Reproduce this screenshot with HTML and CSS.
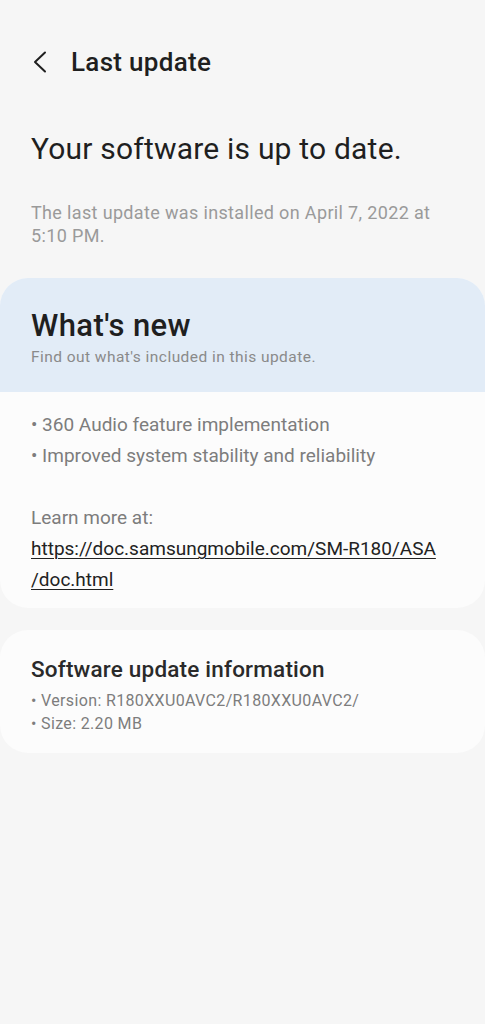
FILE: index.html
```html
<!DOCTYPE html>
<html>
<head>
<meta charset="utf-8">
<link rel="stylesheet" href="styles.css">
</head>
<body>
<div class="page">
  <header class="topbar">
    <svg class="back" width="16" height="22" viewBox="0 0 16 22"><path d="M13 1.5 L3 11 L13 20.5" fill="none" stroke="#1f1f1f" stroke-width="2" stroke-linecap="round" stroke-linejoin="round"/></svg>
    <h1 class="title">Last update</h1>
  </header>
  <section class="status">
    <h2 class="status-head">Your software is up to date.</h2>
    <p class="status-sub">The last update was installed on April 7, 2022 at 5:10 PM.</p>
  </section>
  <section class="card news">
    <div class="news-head">
      <h3 class="news-title">What's new</h3>
      <p class="news-sub">Find out what's included in this update.</p>
    </div>
    <div class="news-body">
      <p class="line">• 360 Audio feature implementation</p>
      <p class="line">• Improved system stability and reliability</p>
      <p class="line gap">Learn more at:</p>
      <p class="line link"><span class="u">https://doc.samsungmobile.com/SM-R180/ASA</span><br><span class="u">/doc.html</span></p>
    </div>
  </section>
  <section class="card info">
    <h3 class="info-title">Software update information</h3>
    <p class="info-line">• Version: R180XXU0AVC2/R180XXU0AVC2/</p>
    <p class="info-line">• Size: 2.20 MB</p>
  </section>
</div>
</body>
</html>
```
FILE: styles.css
```css
html, body {
  margin: 0;
  padding: 0;
  background: #f6f6f6;
}
body {
  font-family: Roboto, "Noto Sans", sans-serif;
  color: #1f1f1f;
  width: 485px;
  height: 1024px;
  overflow: hidden;
}
h1, h2, h3, p { margin: 0; font-weight: normal; }
.page { display: flex; flex-direction: column; }
.topbar {
  display: flex;
  align-items: center;
  padding: 45px 0 0 32px;
  height: 34px;
}
.back { display: block; margin-right: 23px; }
.title {
  font-size: 26px;
  font-weight: 500;
  color: #1f1f1f;
  letter-spacing: 0.3px;
}
.status { padding: 52px 31px 0 31px; }
.status-head {
  font-size: 30px;
  line-height: 36px;
  color: #1f1f1f;
  letter-spacing: 0.2px;
}
.status-sub {
  margin-top: 34px;
  font-size: 18px;
  line-height: 23px;
  color: #9a9a9a;
  letter-spacing: 0.35px;
  padding-right: 20px;
}
.card {
  background: #fcfcfc;
  border-radius: 28px;
  overflow: hidden;
}
.news { margin-top: 31px; }
.news-head {
  background: #e2ecf7;
  padding: 30px 31px 26px 31px;
}
.news-title {
  font-size: 31px;
  font-weight: 500;
  line-height: 36px;
  color: #1f1f1f;
  letter-spacing: 0.4px;
}
.news-sub {
  margin-top: 4px;
  font-size: 15.5px;
  line-height: 18px;
  color: #8a8a8a;
  letter-spacing: 0.45px;
}
.news-body { padding: 17px 31px 13px 31px; }
.line {
  font-size: 19px;
  line-height: 31px;
  color: #7d7d7d;
}
.gap { margin-top: 31px; }
.link { color: #222; }
.u { text-decoration: underline; text-underline-offset: 3px; text-decoration-thickness: 1px; }
.info {
  margin-top: 22px;
  padding: 24px 31px 18px 31px;
}
.info-title {
  font-size: 22.5px;
  font-weight: 500;
  line-height: 30px;
  color: #2a2a2a;
  letter-spacing: 0.2px;
  margin-bottom: 5px;
}
.info-line {
  font-size: 16px;
  line-height: 23px;
  color: #7d7d7d;
  letter-spacing: 0.35px;
}
```
